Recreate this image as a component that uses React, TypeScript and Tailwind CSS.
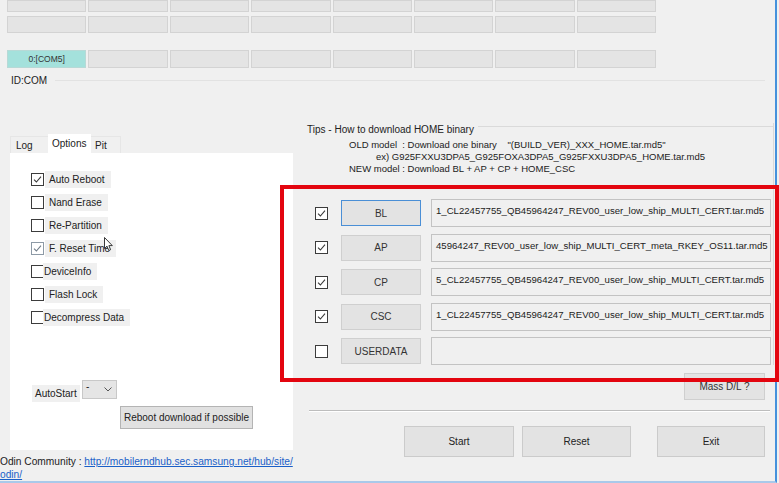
import React from "react";

function Check({ checked, light }: { checked?: boolean; light?: boolean }) {
  return (
    <div
      className={`w-[13px] h-[13px] bg-white border shrink-0 flex items-center justify-center ${
        light ? "border-[#8d9aa6]" : "border-[#3c3c3c]"
      }`}
    >
      {checked && (
        <svg width="11" height="11" viewBox="0 0 11 11">
          <path d="M2 5.6 L4.4 8 L9 2.6" fill="none" stroke={light ? "#6f7c88" : "#3a3a3a"} strokeWidth="1.1" />
        </svg>
      )}
    </div>
  );
}

function TopBox({ children, teal }: { children?: React.ReactNode; teal?: boolean }) {
  return (
    <div
      className={`h-full border flex items-center justify-center text-[8.5px] text-[#333] ${
        teal ? "bg-[#a4e1dc] border-[#b7d9d6]" : "bg-[#e4e4e4] border-[#d3d3d3]"
      }`}
    >
      {children}
    </div>
  );
}

const options: { label: string; checked?: boolean; light?: boolean; tight?: boolean }[] = [
  { label: "Auto Reboot", checked: true },
  { label: "Nand Erase" },
  { label: "Re-Partition" },
  { label: "F. Reset Time", checked: true, light: true },
  { label: "DeviceInfo", tight: true },
  { label: "Flash Lock" },
  { label: "Decompress Data", tight: true },
];

const files: { name: string; checked: boolean; text: string; focus?: boolean }[] = [
  { name: "BL", checked: true, focus: true, text: "1_CL22457755_QB45964247_REV00_user_low_ship_MULTI_CERT.tar.md5" },
  { name: "AP", checked: true, text: "45964247_REV00_user_low_ship_MULTI_CERT_meta_RKEY_OS11.tar.md5" },
  { name: "CP", checked: true, text: "5_CL22457755_QB45964247_REV00_user_low_ship_MULTI_CERT.tar.md5" },
  { name: "CSC", checked: true, text: "1_CL22457755_QB45964247_REV00_user_low_ship_MULTI_CERT.tar.md5" },
  { name: "USERDATA", checked: false, text: "" },
];

export default function App() {
  return (
    <div className="w-[779px] h-[483px] bg-[#f0f0f0] relative overflow-hidden font-['Liberation_Sans',Arial,sans-serif] text-[#222]">
      <div className="w-[777px] h-[483px] border-r-2 border-r-[#4591dc] border-b-2 border-b-[#a9c9ea] flex flex-col">
        {/* top section */}
        <div className="h-[120px] flex flex-col shrink-0">
          <div className="ml-[7px] grid grid-cols-8 gap-x-[2px] w-[649px] h-[12px]">
            {Array.from({ length: 8 }).map((_, i) => (
              <TopBox key={i} />
            ))}
          </div>
          <div className="ml-[7px] mt-[4px] grid grid-cols-8 gap-x-[2px] w-[649px] h-[17px]">
            {Array.from({ length: 8 }).map((_, i) => (
              <TopBox key={i} />
            ))}
          </div>
          <div className="ml-[7px] mt-[17px] grid grid-cols-8 gap-x-[2px] w-[649px] h-[18px]">
            <TopBox teal>0:[COM5]</TopBox>
            {Array.from({ length: 7 }).map((_, i) => (
              <TopBox key={i} />
            ))}
          </div>
          <div className="mt-[5px] h-[14px] flex items-center">
            <span className="ml-[11px] text-[10px] text-[#222]">ID:COM</span>
            <div className="flex-1 ml-[8px] mr-[10px] h-px bg-[#e2e2e2]" />
          </div>
        </div>

        {/* main */}
        <div className="flex flex-1 min-h-0">
          {/* left column */}
          <div className="w-[300px] shrink-0 flex flex-col pt-[14px]">
            <div className="ml-[10px] flex items-end h-[19px] text-[10px]">
              <div className="w-[38px] h-[17px] flex items-center pl-[5px] border-l border-t border-[#e6e6e6]">Log</div>
              <div className="w-[43px] h-[19px] flex items-center pl-[4px] bg-white">Options</div>
              <div className="w-[30px] h-[17px] flex items-center pl-[4px] border-r border-t border-[#e6e6e6]">Pit</div>
            </div>
            <div className="ml-[10px] w-[283px] h-[303px] bg-white flex flex-col pt-[16px] pl-[21px] text-[10px]">
              <div className="flex flex-col gap-[3px]">
                {options.map((o) => (
                  <div key={o.label} className="h-[20px] flex items-center">
                    <Check checked={o.checked} light={o.light} />
                    <div
                      className={`h-[17px] bg-[#f0f0f0] flex items-center ${
                        o.tight ? "pl-[1px] pr-[6px] -ml-[1px]" : "ml-[1px] pl-[4px] pr-[6px]"
                      }`}
                    >
                      {o.label}
                    </div>
                  </div>
                ))}
              </div>
              <div className="mt-[53px] ml-[1px] flex items-start">
                <div className="mt-[5px] w-[48px] h-[17px] bg-[#f0f0f0] flex items-center pl-[3px]">AutoStart</div>
                <div className="ml-[2px] w-[35px] h-[19px] bg-[#e5e5e5] border border-[#c8c8c8] flex items-center justify-between pl-[3px] pr-[4px]">
                  <span className="text-[10px] leading-none -mt-[6px]">-</span>
                  <svg width="8" height="5" viewBox="0 0 8 5">
                    <path d="M0.5 0.5 L4 4 L7.5 0.5" fill="none" stroke="#555" strokeWidth="1" />
                  </svg>
                </div>
              </div>
              <div className="mt-[4px] ml-[89px] w-[133px] h-[23px] bg-[#e1e1e1] border border-[#b4b4b4] flex items-center justify-center">
                Reboot download if possible
              </div>
            </div>
            <div className="mt-[5px] text-[10.2px] leading-[13px] whitespace-nowrap">
              <span className="text-[#222]">Odin Community : </span>
              <span className="text-[#1a5fc8] underline">http://mobilerndhub.sec.samsung.net/hub/site/</span>
              <br />
              <span className="text-[#1a5fc8] underline">odin/</span>
            </div>
          </div>

          {/* right column */}
          <div className="flex-1 flex flex-col pl-[3px] pt-[3px] text-[10px]">
            <div className="mr-[1px] border-r border-[#d9d9d9]">
              <div className="flex items-start">
                <span className="pl-[4px] leading-[14px]">Tips - How to download HOME binary</span>
                <div className="flex-1 h-px bg-[#dadada] mt-[3px] ml-[4px]" />
              </div>
              <div className="mt-[2px] text-[9.5px] leading-[12px] whitespace-pre">
                <div className="pl-[46px]">{'OLD model  : Download one binary    "(BUILD_VER)_XXX_HOME.tar.md5"'}</div>
                <div className="pl-[73px]">ex) G925FXXU3DPA5_G925FOXA3DPA5_G925FXXU3DPA5_HOME.tar.md5</div>
                <div className="pl-[46px]">NEW model : Download BL + AP + CP + HOME_CSC</div>
              </div>

              <div className="mt-[24px] flex flex-col gap-[6.5px] pl-[12px]">
                {files.map((f) => (
                  <div key={f.name} className="h-[28px] flex items-center">
                    <Check checked={f.checked} />
                    <div
                      className={`ml-[13px] w-[80px] h-[26px] bg-[#e3e3e3] border flex items-center justify-center text-[#333] ${
                        f.focus ? "border-[#4a8fd6]" : "border-[#cfcfcf]"
                      }`}
                    >
                      {f.name}
                    </div>
                    <div className="ml-[10px] w-[340px] h-[28px] bg-[#f0f0f0] border border-[#c3c3c3] flex items-start overflow-hidden pt-[4px] pl-[4px]">
                      <span className="whitespace-nowrap text-[9.6px] text-[#222]">{f.text}</span>
                    </div>
                  </div>
                ))}
              </div>
            </div>

            <div className="mt-[8px] self-end mr-[10px] w-[81px] h-[27px] bg-[#e3e3e3] border border-[#cfcfcf] flex items-center justify-center text-[#333]">
              Mass D/L ?
            </div>
            <div className="mt-[10px] ml-[6px] mr-[5px] border-t border-t-[#bdbdbd] border-b border-b-white" />
            <div className="mt-[14px] mr-[10px] flex justify-end">
              <div className="w-[110px] h-[31px] bg-[#e3e3e3] border border-[#cbcbcb] flex items-center justify-center">Start</div>
              <div className="ml-[8px] w-[109px] h-[31px] bg-[#e3e3e3] border border-[#cbcbcb] flex items-center justify-center">Reset</div>
              <div className="ml-[26px] w-[108px] h-[31px] bg-[#e3e3e3] border border-[#cbcbcb] flex items-center justify-center">Exit</div>
            </div>
          </div>
        </div>
      </div>

      {/* red highlight overlay */}
      <div className="absolute left-[280px] top-[185px] w-[499px] h-[197px] border-[4px] border-[#e3050f] pointer-events-none" />

      {/* mouse cursor */}
      <svg className="absolute left-[104px] top-[237px]" width="10" height="15" viewBox="0 0 10 15">
        <path d="M0.5 0.5 L0.5 11.5 L3 9.2 L4.8 13.5 L6.6 12.7 L4.9 8.6 L8.3 8.6 Z" fill="white" stroke="#222" strokeWidth="0.9" strokeLinejoin="round" />
      </svg>
    </div>
  );
}
